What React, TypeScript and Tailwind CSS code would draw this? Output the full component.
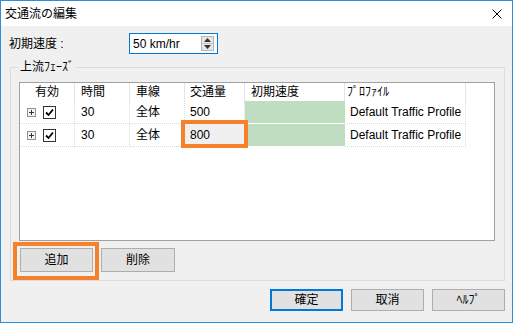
import type { ReactNode } from 'react';

type Row = { time: string; lane: string; volume: string; profile: string; editing?: boolean };

const ROWS: Row[] = [
  { time: '30', lane: '全体', volume: '500', profile: 'Default Traffic Profile' },
  { time: '30', lane: '全体', volume: '800', profile: 'Default Traffic Profile', editing: true },
];

const FONT = "font-['Liberation_Sans','Noto_Sans_CJK_JP',sans-serif]";

function Button({ children, focused, className = '' }: { children: ReactNode; focused?: boolean; className?: string }) {
  return (
    <button
      type="button"
      className={`flex items-center justify-center bg-[#e1e1e1] text-[12px] text-black ${
        focused ? 'border-2 border-[#0078d7]' : 'border border-[#adadad]'
      } ${className}`}
    >
      {children}
    </button>
  );
}

function Checkbox() {
  return (
    <span className="flex h-[13px] w-[13px] items-center justify-center border border-[#333] bg-white">
      <svg width="9" height="9" viewBox="0 0 9 9">
        <path d="M1 4.5 L3.5 7 L8 1.5" fill="none" stroke="#000" strokeWidth="1.8" />
      </svg>
    </span>
  );
}

function PlusBox() {
  return (
    <span className="flex h-[9px] w-[9px] items-center justify-center border border-[#919191] bg-[#f4f4f4]">
      <svg width="7" height="7" viewBox="0 0 7 7">
        <path d="M1 3.5 H6 M3.5 1 V6" stroke="#333" strokeWidth="1" />
      </svg>
    </span>
  );
}

export default function App() {
  return (
    <div className={`h-[323px] w-[514px] bg-white ${FONT}`}>
      <div className="flex h-[323px] w-[513px] flex-col border border-[#2b8fdb]">
        {/* title bar */}
        <div className="flex h-[25px] items-center justify-between bg-white pl-[4px] pr-[10px] text-[12px] text-black">
          <span>交通流の編集</span>
          <svg width="10" height="10" viewBox="0 0 10 10">
            <path d="M0.5 0.5 L9.5 9.5 M9.5 0.5 L0.5 9.5" stroke="#000" strokeWidth="1" />
          </svg>
        </div>

        <div className="flex flex-1 flex-col bg-[#f0f0f0] text-[12px] text-black">
          {/* initial speed */}
          <div className="mt-[7px] flex items-center pl-[8px]">
            <span className="w-[120px]">初期速度 :</span>
            <div className="flex h-[21px] w-[89px] items-center justify-between border border-[#0078d7] bg-white pl-[3px] pr-[3px]">
              <span>50 km/hr</span>
              <div className="flex h-[15px] w-[13px] flex-col border border-[#b5b5b5] bg-[#e6e6e6]">
                <div className="flex flex-1 items-center justify-center border-b border-[#c8c8c8]">
                  <svg width="7" height="4" viewBox="0 0 7 4">
                    <path d="M0 4 L3.5 0 L7 4 Z" fill="#333" />
                  </svg>
                </div>
                <div className="flex flex-1 items-center justify-center">
                  <svg width="7" height="4" viewBox="0 0 7 4">
                    <path d="M0 0 L3.5 4 L7 0 Z" fill="#333" />
                  </svg>
                </div>
              </div>
            </div>
          </div>

          {/* group box */}
          <div className="ml-[9px] mt-[13px] flex h-[214px] w-[495px] flex-col border border-[#dcdcdc]">
            <span className="-mt-[8px] ml-[7px] w-fit bg-[#f0f0f0] px-[2px] leading-[14px]">上流ﾌｪｰｽﾞ</span>

            {/* list */}
            <div className="ml-[8px] mt-[8px] h-[159px] w-[476px] border border-[#a0a0a0] bg-white">
              <div className="flex h-[18px] items-center">
                <div className="flex h-full w-[55px] items-center justify-center border-r border-[#e5e5e5]">有効</div>
                <div className="flex h-full w-[55px] items-center border-r border-[#e5e5e5] pl-[6px]">時間</div>
                <div className="flex h-full w-[55px] items-center border-r border-[#e5e5e5] pl-[6px]">車線</div>
                <div className="flex h-full w-[60px] items-center border-r border-[#e5e5e5] pl-[5px]">交通量</div>
                <div className="flex h-full w-[100px] items-center border-r border-[#e5e5e5] pl-[6px]">初期速度</div>
                <div className="flex h-full w-[121px] items-center border-r border-[#e5e5e5] pl-[2px]">ﾌﾟﾛﾌｧｲﾙ</div>
              </div>

              {ROWS.map((r, i) => (
                <div key={i} className="flex h-[23px]">
                  <div className="flex w-[55px] items-center gap-[7px] border-b border-r border-dotted border-[#dadada] pl-[7px]">
                    <PlusBox />
                    <Checkbox />
                  </div>
                  <div className="flex w-[55px] items-center border-b border-r border-dotted border-[#dadada] pl-[6px]">{r.time}</div>
                  <div className="flex w-[55px] items-center border-b border-r border-dotted border-[#dadada] pl-[6px]">{r.lane}</div>
                  <div className="relative flex w-[60px] items-center border-b border-r border-dotted border-[#dadada] pl-[5px]">
                    {r.editing && <div className="absolute inset-0 bg-[#f0f0f0]" />}
                    <span className="relative">{r.volume}</span>
                    {r.editing && (
                      <div className="absolute -bottom-[2px] -left-[4px] -right-[4px] -top-[4px] border-[4px] border-[#f5822a]" />
                    )}
                  </div>
                  <div className="w-[100px] border-b border-white bg-[#c0ddc2]" />
                  <div className="flex w-[121px] items-center border-b border-r border-dotted border-[#dadada] pl-[5px]">{r.profile}</div>
                </div>
              ))}
            </div>

            {/* add / delete */}
            <div className="ml-[9px] mt-[7px] flex gap-[8px]">
              <div className="relative">
                <Button className="h-[24px] w-[73px]">追加</Button>
                <div className="absolute -bottom-[8px] -left-[7px] -right-[6px] -top-[6px] border-[4px] border-[#f5822a]" />
              </div>
              <Button className="h-[24px] w-[74px]">削除</Button>
            </div>
          </div>

          {/* dialog buttons */}
          <div className="mr-[7px] mt-[8px] flex justify-end gap-[8px]">
            <Button focused className="h-[22px] w-[73px]">確定</Button>
            <Button className="h-[22px] w-[73px]">取消</Button>
            <Button className="h-[22px] w-[73px]">ﾍﾙﾌﾟ</Button>
          </div>
        </div>
      </div>
    </div>
  );
}
